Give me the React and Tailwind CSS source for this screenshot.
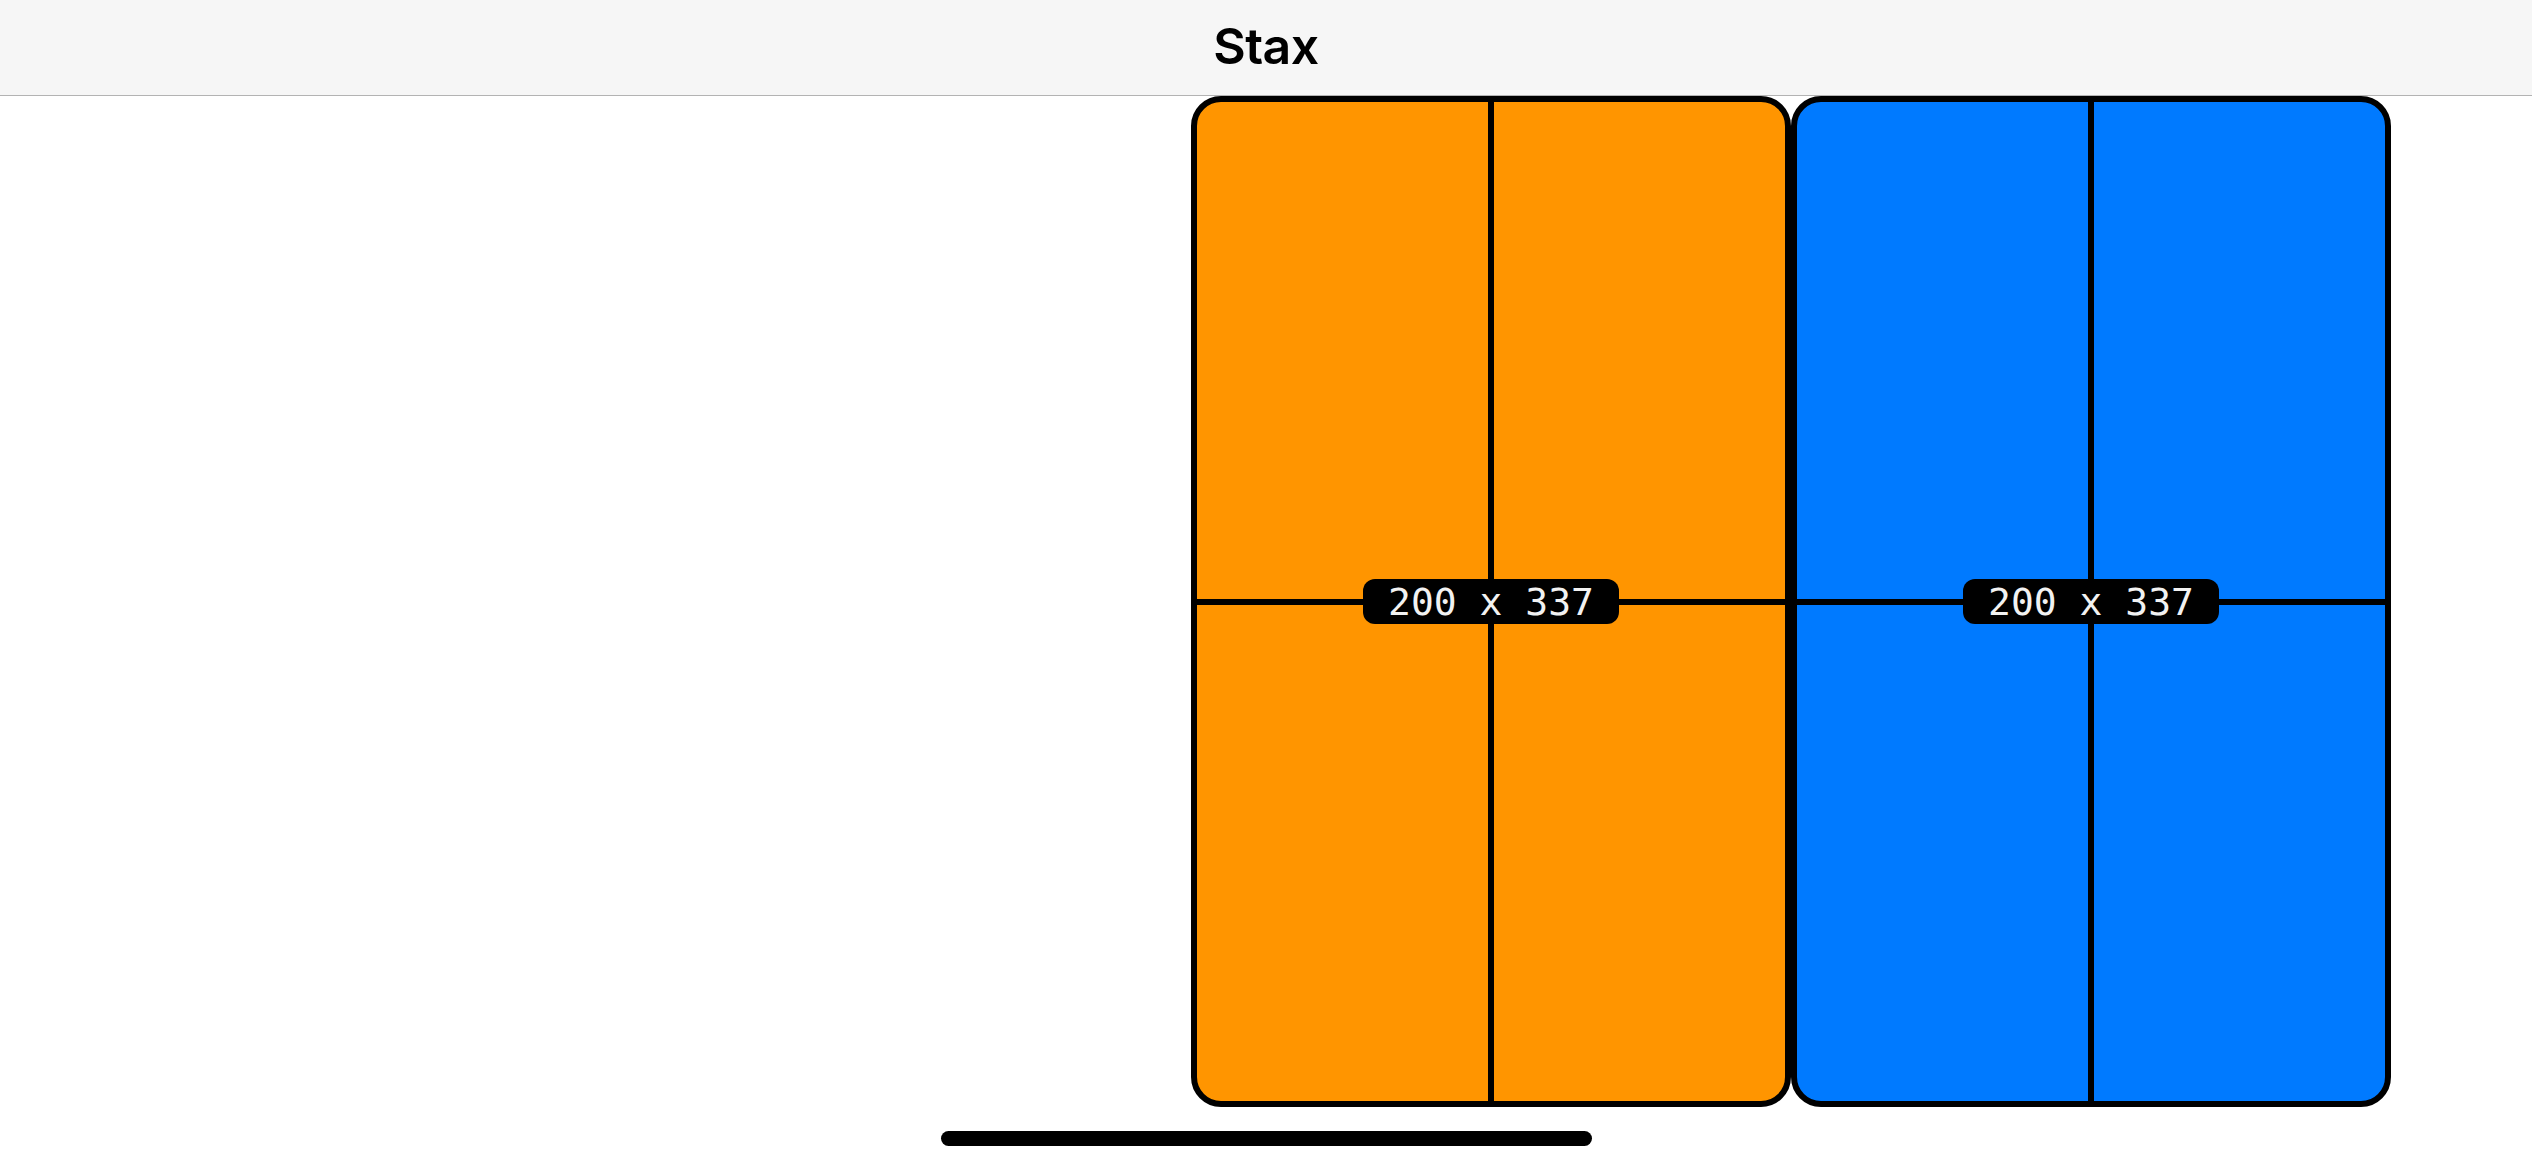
import React from 'react';

const cards = [
  { id: 'orange', color: 'bg-[#ff9500]', w: 200, h: 337 },
  { id: 'blue', color: 'bg-[#007aff]', w: 200, h: 337 },
];

const SizeCard = ({ color, w, h }) => (
  <div
    className={`relative w-[600px] h-[1011px] shrink-0 rounded-[30px] border-[6px] border-black overflow-hidden ${color}`}
  >
    {/* crosshair */}
    <div className="absolute left-1/2 top-0 h-full w-[6px] -translate-x-1/2 bg-black" />
    <div className="absolute top-1/2 left-0 w-full h-[6px] -translate-y-1/2 bg-black" />
    <div className="absolute inset-0 flex items-center justify-center">
      <span className="h-[45px] px-[25px] flex items-center rounded-[12px] bg-black text-[#f2f2f2] text-[38px] leading-none font-['DejaVu_Sans_Mono',monospace] whitespace-pre">
        {`${w} x ${h}`}
      </span>
    </div>
  </div>
);

const App = () => {
  return (
    <div className="w-[2532px] h-[1170px] bg-white flex flex-col overflow-hidden font-['Inter',sans-serif]">
      {/* Nav bar */}
      <div className="h-[96px] shrink-0 bg-[#f6f6f6] border-b border-[#b3b3b3] flex items-center justify-center">
        <h1 className="text-[50px] font-semibold tracking-[-0.5px] text-black leading-none -mt-[4px]">Stax</h1>
      </div>

      {/* Card stack */}
      <div className="flex pl-[1191px]">
        {cards.map((c) => (
          <SizeCard key={c.id} {...c} />
        ))}
      </div>

      {/* Home indicator */}
      <div className="flex justify-center mt-[24px]">
        <div className="w-[651px] h-[15px] rounded-full bg-black" />
      </div>
    </div>
  );
};

export default App;
